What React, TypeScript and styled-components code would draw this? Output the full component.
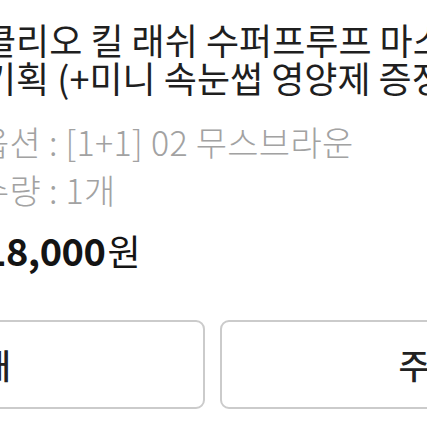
import React from 'react';
import styled, { createGlobalStyle } from 'styled-components';

const GlobalStyle = createGlobalStyle`
  html, body {
    margin: 0;
    padding: 0;
    background: #ffffff;
  }
  body {
    font-family: "Noto Sans CJK KR", "Noto Sans", sans-serif;
  }
`;

const Screen = styled.div`
  width: 427px;
  height: 427px;
  overflow: hidden;
  background: #ffffff;
  display: flex;
  flex-direction: column;
`;

const Title = styled.div`
  margin: 20px 0 0 -17px;
  font-size: 36px;
  line-height: 38px;
  color: #1f1f1f;
  white-space: nowrap;
`;

const TitleLine = styled.div``;

const Options = styled.div`
  margin: 22px 0 0 -22px;
  display: flex;
  flex-direction: column;
`;

const OptionRow = styled.div`
  font-size: 34px;
  font-weight: 300;
  line-height: 48px;
  letter-spacing: 0.3px;
  color: #a2a2a2;
  white-space: nowrap;
`;

const Price = styled.div`
  margin: 12px 0 0 -16px;
  display: flex;
  align-items: baseline;
  gap: 2px;
  line-height: 48px;
  color: #141414;
  white-space: nowrap;
`;

const Amount = styled.span`
  font-size: 38px;
  font-weight: 700;
  letter-spacing: -0.5px;
`;

const Won = styled.span`
  font-size: 36px;
  font-weight: 400;
`;

const ButtonRow = styled.div`
  margin: 46px 0 0 -277px;
  display: flex;
  gap: 15px;
  width: 979px;
`;

const ActionButton = styled.button`
  flex: 1;
  height: 89px;
  border: 2px solid #cbcbcb;
  border-radius: 9px;
  background: #ffffff;
  font-family: "Noto Sans CJK KR", "Noto Sans", sans-serif;
  font-size: 34px;
  font-weight: 500;
  color: #222222;
  display: flex;
  align-items: center;
  justify-content: center;
  padding: 0;
`;

export default function App() {
  return (
    <>
      <GlobalStyle />
      <Screen>
        <Title>
          <TitleLine>클리오 킬 래쉬 수퍼프루프 마스카라</TitleLine>
          <TitleLine>기획 (+미니 속눈썹 영양제 증정)</TitleLine>
        </Title>
        <Options>
          <OptionRow>옵션 : [1+1] 02 무스브라운</OptionRow>
          <OptionRow>수량 : 1개</OptionRow>
        </Options>
        <Price>
          <Amount>18,000</Amount>
          <Won>원</Won>
        </Price>
        <ButtonRow>
          <ActionButton>재구매</ActionButton>
          <ActionButton>주문상세</ActionButton>
        </ButtonRow>
      </Screen>
    </>
  );
}
